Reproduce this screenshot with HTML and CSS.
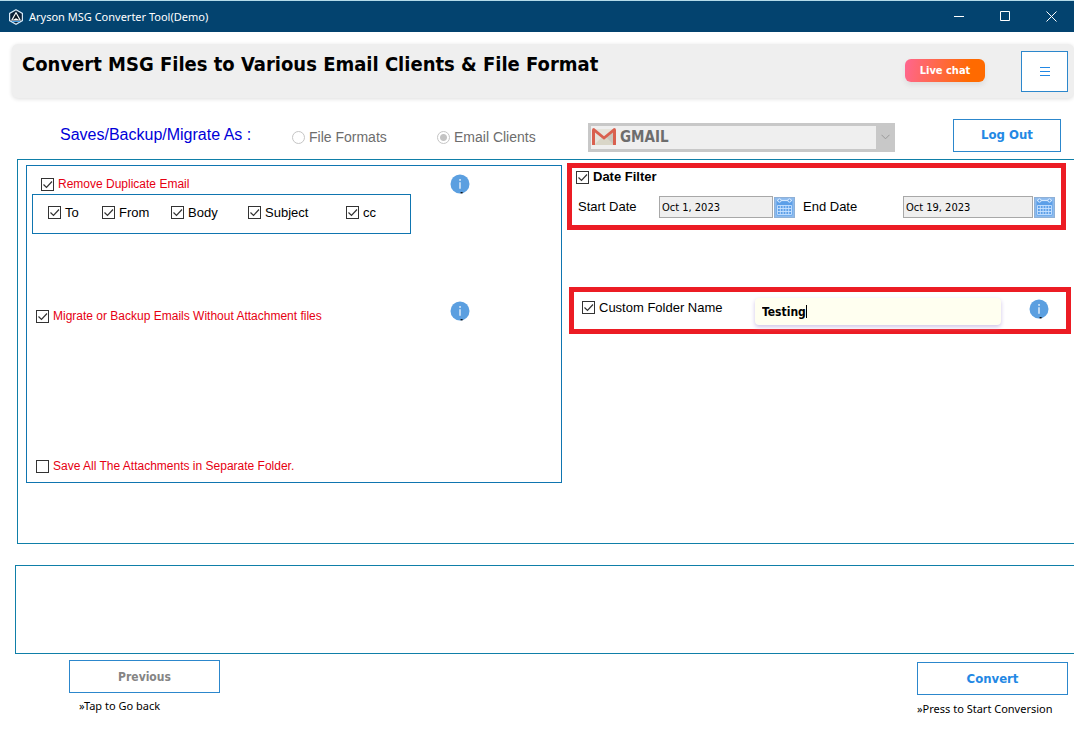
FILE: index.html
```html
<!DOCTYPE html>
<html lang="en">
<head>
<meta charset="utf-8">
<title>Aryson MSG Converter Tool(Demo)</title>
<link rel="stylesheet" href="styles.css">
</head>
<body>
<svg class="defs" aria-hidden="true">
  <symbol id="info" viewBox="0 0 20 20">
    <circle cx="10" cy="10" r="9.5" fill="#5b9fe0"/>
    <path d="M10 8.2v6.6" stroke="#fff" stroke-width="1.2"/>
    <rect x="9.3" y="5.2" width="1.5" height="1.5" fill="#fff"/>
    <rect x="10.6" y="18" width="2" height="1.4" fill="#111"/>
  </symbol>
  <symbol id="calendar" viewBox="0 0 21 21">
    <rect width="21" height="21" fill="#8dbbee"/>
    <rect x=".5" y=".5" width="20" height="20" fill="none" stroke="#8fb0d6"/>
    <rect x="2.5" y="3" width="16" height="15.5" rx="1" fill="#5c9fe8"/>
    <path d="M3 3.500h15" stroke="#d3e8ff" stroke-width="1.200"/>
    <circle cx="5.500" cy="3.500" r="1.600" fill="#5c9fe8" stroke="#e4f1ff"/>
    <circle cx="15.500" cy="3.500" r="1.600" fill="#5c9fe8" stroke="#e4f1ff"/>
    <path d="M3.500 8.500h14M3.500 11.500h14M3.500 14.500h14M3.500 17.500h14M3.500 8.500v9M6.300 8.500v9M9.100 8.500v9M11.900 8.500v9M14.700 8.500v9M17.500 8.500v9" stroke="#c8e2ff" stroke-width=".9"/>
  </symbol>
</svg>

<header class="titlebar">
  <svg class="app-icon" viewBox="0 0 16 16" aria-hidden="true">
    <path d="M8 .7l6.400 3.700v7.200L8 15.300 1.600 11.600V4.400z" fill="#0a2038" stroke="#d5e9f8" stroke-width="1.200"/>
    <path d="M8 2.500l5 9H3z" fill="#fff"/>
    <path d="M8 4.800l3.400 6.200L8 9.300 4.600 11z" fill="#0b1622"/>
    <path d="M4 12.500h8" stroke="#3f9be0"/>
  </svg>
  <span class="app-name">Aryson MSG Converter Tool(Demo)</span>
  <button class="win-btn" aria-label="Minimize"><svg viewBox="0 0 11 11"><path d="M0 5.500h10"/></svg></button>
  <button class="win-btn" aria-label="Maximize"><svg viewBox="0 0 11 11"><path d="M.5 .5h9v9h-9z"/></svg></button>
  <button class="win-btn" aria-label="Close"><svg viewBox="0 0 11 11"><path d="M.5 .5l10 10M10.500 .5l-10 10"/></svg></button>
</header>

<section class="banner">
  <h1>Convert MSG Files to Various Email Clients &amp; File Format</h1>
  <button class="chat">Live chat</button>
  <button class="outline menu" aria-label="Menu"><svg viewBox="0 0 10 9"><path d="M0 .5h10M0 4.500h10M0 8.500h10"/></svg></button>
</section>

<section class="target">
  <span class="target-title">Saves/Backup/Migrate As :</span>
  <label class="radio formats"><input type="radio" name="kind" disabled>File Formats</label>
  <label class="radio clients"><input type="radio" name="kind" checked disabled>Email Clients</label>
  <div class="combo">
    <select aria-label="Email client" disabled><option>GMAIL</option></select>
    <svg class="gmail" viewBox="0 0 24 18" aria-hidden="true">
      <path d="M2 1h20v16H2z" fill="#e6e4dc"/>
      <path d="M12 10l10-8v15h-6z" fill="#c9c6bd"/>
      <path d="M2 17l8-8 2 1.500L14 9l8 8z" fill="#d9d6c8"/>
      <path d="M0 2Q0 0 2 0l10 8.200L22 0q2 0 2 2v14.500q0 .5-.5 .5H21V4.500l-9 7.200-9-7.200V17H.5q-.5 0-.5-.5z" fill="#d9604f"/>
    </svg>
    <span class="arrow"><svg viewBox="0 0 9 6" aria-hidden="true"><path d="M.5 .8l4 4 4-4"/></svg></span>
  </div>
  <button class="outline logout">Log Out</button>
</section>

<main class="panel">
  <section class="options">
    <div class="line first">
      <label class="check red"><input type="checkbox" checked>Remove Duplicate Email</label>
      <svg class="info"><use href="#info"/></svg>
    </div>
    <div class="fields">
      <label class="check"><input type="checkbox" checked>To</label>
      <label class="check"><input type="checkbox" checked>From</label>
      <label class="check"><input type="checkbox" checked>Body</label>
      <label class="check"><input type="checkbox" checked>Subject</label>
      <label class="check"><input type="checkbox" checked>cc</label>
    </div>
    <div class="line second">
      <label class="check red"><input type="checkbox" checked>Migrate or Backup Emails Without Attachment files</label>
      <svg class="info"><use href="#info"/></svg>
    </div>
    <div class="line third">
      <label class="check red"><input type="checkbox">Save All The Attachments in Separate Folder.</label>
    </div>
  </section>

  <div class="side">
    <section class="marked dates">
      <label class="check strong"><input type="checkbox" checked>Date Filter</label>
      <div class="date-row">
        <label for="start">Start Date</label>
        <input id="start" class="date" type="text" value="Oct 1, 2023" readonly>
        <button class="cal" aria-label="Pick start date"><svg><use href="#calendar"/></svg></button>
        <label for="end">End Date</label>
        <input id="end" class="date" type="text" value="Oct 19, 2023" readonly>
        <button class="cal" aria-label="Pick end date"><svg><use href="#calendar"/></svg></button>
      </div>
    </section>
    <section class="marked folder">
      <label class="check big"><input type="checkbox" checked>Custom Folder Name</label>
      <div class="name-box">
        <input type="text" value="Testing" aria-label="Folder name">
        <i class="caret"></i>
      </div>
      <svg class="info"><use href="#info"/></svg>
    </section>
  </div>
</main>

<section class="log"></section>

<footer class="actions">
  <div class="action">
    <button class="outline" disabled>Previous</button>
    <p>»Tap to Go back</p>
  </div>
  <div class="action next">
    <button class="outline">Convert</button>
    <p>»Press to Start Conversion</p>
  </div>
</footer>
</body>
</html>
```
FILE: styles.css
```css
* { box-sizing: border-box; }
body {
  margin: 0;
  min-height: 100vh;
  display: flex;
  flex-direction: column;
  background: #fff;
  color: #000;
  font: 13px/16px "Liberation Sans", Arial, sans-serif;
}
button, input, select { font: inherit; margin: 0; }
.defs { display: none; }

.titlebar {
  display: flex;
  align-items: center;
  height: 32px;
  padding-left: 8px;
  background: #03436f;
  border-top: 1px solid #b4dbe9;
  color: #fff;
}
.app-icon { width: 16px; height: 16px; }
.app-name { flex: 1; margin-left: 5px; font: 11px/16px "Noto Sans", "Segoe UI", sans-serif; }
.win-btn {
  display: flex;
  align-items: center;
  justify-content: center;
  width: 46px;
  height: 31px;
  padding: 0;
  border: 0;
  background: none;
}
.win-btn svg { width: 11px; height: 11px; fill: none; stroke: #fff; }

.banner {
  display: flex;
  align-items: flex-start;
  min-height: 54px;
  margin: 12px 0 0 12px;
  padding: 7px 6px 6px 10px;
  border-radius: 6px;
  background: #efefef;
  box-shadow: 0 1px 4px #ddd;
}
h1 { flex: 1; margin: 0; font: bold 20px/26px "DejaVu Sans Condensed", Tahoma, sans-serif; }
.chat {
  width: 80px;
  height: 23px;
  margin: 8px 36px 0 0;
  padding: 0;
  border: 0;
  border-radius: 6px;
  background: linear-gradient(100deg, #ff6690, #ff6a00 80%);
  box-shadow: 0 3px 5px #ddd;
  color: #fff;
  font: bold 11px/16px "DejaVu Sans Condensed", Tahoma, sans-serif;
}
.outline {
  height: 33px;
  padding: 0;
  border: 1px solid #2c87cc;
  background: #fff;
  color: #2388e4;
  font: bold 13px/16px "DejaVu Sans Condensed", Tahoma, sans-serif;
}
.outline:disabled { color: #858585; font-size: 12px; }
.menu { width: 47px; height: 41px; }
.menu svg { width: 10px; height: 9px; stroke: #2388e4; }

.target {
  display: flex;
  align-items: center;
  height: 61px;
  padding: 13px 13px 0 60px;
}
.target-title { width: 232px; color: #0000d8; font-size: 16px; }
.radio { display: flex; align-items: center; gap: 4px; color: #6d6d6d; font-size: 14px; padding-top: 4px; }
.radio input {
  appearance: none;
  width: 13px;
  height: 13px;
  border: 1px solid #c5c5c5;
  border-radius: 50%;
}
.radio input:checked { background: radial-gradient(circle, #c4c4c4 3px, #fff 4px); }
.formats { width: 145px; }
.clients { width: 151px; }
.combo { display: grid; grid-template-columns: 1fr 19px; flex: 1; height: 29px; margin-right: 58px; align-items: center; margin-top: 4px; }
.combo select {
  grid-area: 1 / 1 / 2 / 3;
  appearance: none;
  height: 29px;
  padding: 0 22px 0 29px;
  border: 3px solid #c8c8c8;
  border-radius: 0;
  background: #efefef;
  color: #6d6d6d;
  opacity: 1;
  font: bold 15px/20px "DejaVu Sans Condensed", Tahoma, sans-serif;
}
.gmail { grid-area: 1 / 1; width: 24px; height: 18px; margin-left: 4px; }
.arrow { grid-area: 1 / 2; display: flex; align-items: center; justify-content: center; height: 29px; background: #c8c8c8; }
.arrow svg { width: 9px; height: 6px; fill: none; stroke: #999; }
.logout { width: 108px; }

.panel {
  display: grid;
  grid-template-columns: 536fr 504fr;
  align-items: start;
  gap: 5px;
  min-height: 385px;
  margin-left: 17px;
  padding: 3px 3px 4px 8px;
  border: 1px solid #0f7fa8;
  border-right: 0;
}
.options {
  display: flex;
  flex-direction: column;
  height: 318px;
  margin-top: 2px;
  border: 1px solid #0f75b0;
}
.line { display: flex; align-items: flex-start; justify-content: space-between; padding: 0 91px 0 9px; }
.first { padding-left: 14px; padding-top: 8px; }
.first .check { padding-top: 2px; }
.second { margin-top: 67px; }
.second .check { padding-top: 7px; }
.third { margin-top: 134px; }
.check { display: flex; align-items: center; gap: 4px; }
.check input {
  appearance: none;
  width: 13px;
  height: 13px;
  flex: none;
  border: 1px solid #333;
  background: #fff;
}
.check input:checked { background: #fff url("data:image/svg+xml,%3Csvg xmlns='http://www.w3.org/2000/svg' viewBox='0 0 11 11'%3E%3Cpath d='M1.500 5.500l3 3 5.500-6' fill='none' stroke='%23333' stroke-width='1.200'/%3E%3C/svg%3E") center / 11px 11px; }
.red { color: #e60012; font-size: 12px; }
.info { width: 20px; height: 20px; flex: none; }
.fields {
  display: grid;
  grid-template-columns: 54px 69px 77px 98px 1fr;
  align-items: center;
  width: 379px;
  height: 40px;
  margin-left: 5px;
  padding: 0 10px 3px 15px;
  border: 1px solid #0f75b0;
}

.side { display: flex; flex-direction: column; gap: 57px; }
.marked { border: 5px solid #ec1c24; }
.dates { height: 67px; margin-right: 5px; padding: 0 6px 0 4px; }
.strong { padding-top: 1px; font-weight: bold; }
.date-row {
  display: grid;
  grid-template-columns: 83px 115fr 21px 108px 131fr 21px;
  align-items: center;
  margin-top: 11px;
}
.date-row label { padding-left: 2px; }
.cal + label { padding-left: 8px; }
.date {
  min-width: 0;
  height: 22px;
  margin-right: 1px;
  padding: 0 2px;
  border: 1px solid #a8a8a8;
  background: #efefef;
  font: 11px/16px "DejaVu Sans Condensed", Tahoma, sans-serif;
}
.cal { width: 21px; height: 21px; padding: 0; border: 0; background: none; }
.cal svg { display: block; width: 21px; height: 21px; }
.folder { display: flex; align-items: center; height: 47px; margin-left: 2px; padding: 0 17px 0 8px; }
.big { width: 173px; padding-bottom: 6px; }
.folder .info { margin-bottom: 4px; }
.name-box {
  display: grid;
  align-items: center;
  flex: 1;
  height: 27px;
  margin: 2px 28px 0 0;
  border-radius: 4px;
  background: #fffff0;
  box-shadow: 0 2px 4px #cfc4e8;
}
.name-box input {
  grid-area: 1 / 1;
  min-width: 0;
  width: 100%;
  padding: 0 7px;
  border: 0;
  background: none;
  font: bold 12px/16px "DejaVu Sans Condensed", Tahoma, sans-serif;
}
.caret { grid-area: 1 / 1; width: 1px; height: 13px; margin-left: 51px; background: #000; }

.log { height: 89px; margin: 21px 0 0 15px; border: 1px solid #0f7fa8; border-right: 0; }

.actions { display: flex; justify-content: space-between; padding: 6px 6px 0 69px; }
.action { width: 151px; }
.action .outline { width: 100%; }
.next { padding-top: 2px; }
p { margin: 5px 0 0; font: 11px/16px "Noto Sans", Tahoma, sans-serif; padding-left: 10px; white-space: nowrap; }
.next p { padding-left: 0; margin-top: 6px; }
```
